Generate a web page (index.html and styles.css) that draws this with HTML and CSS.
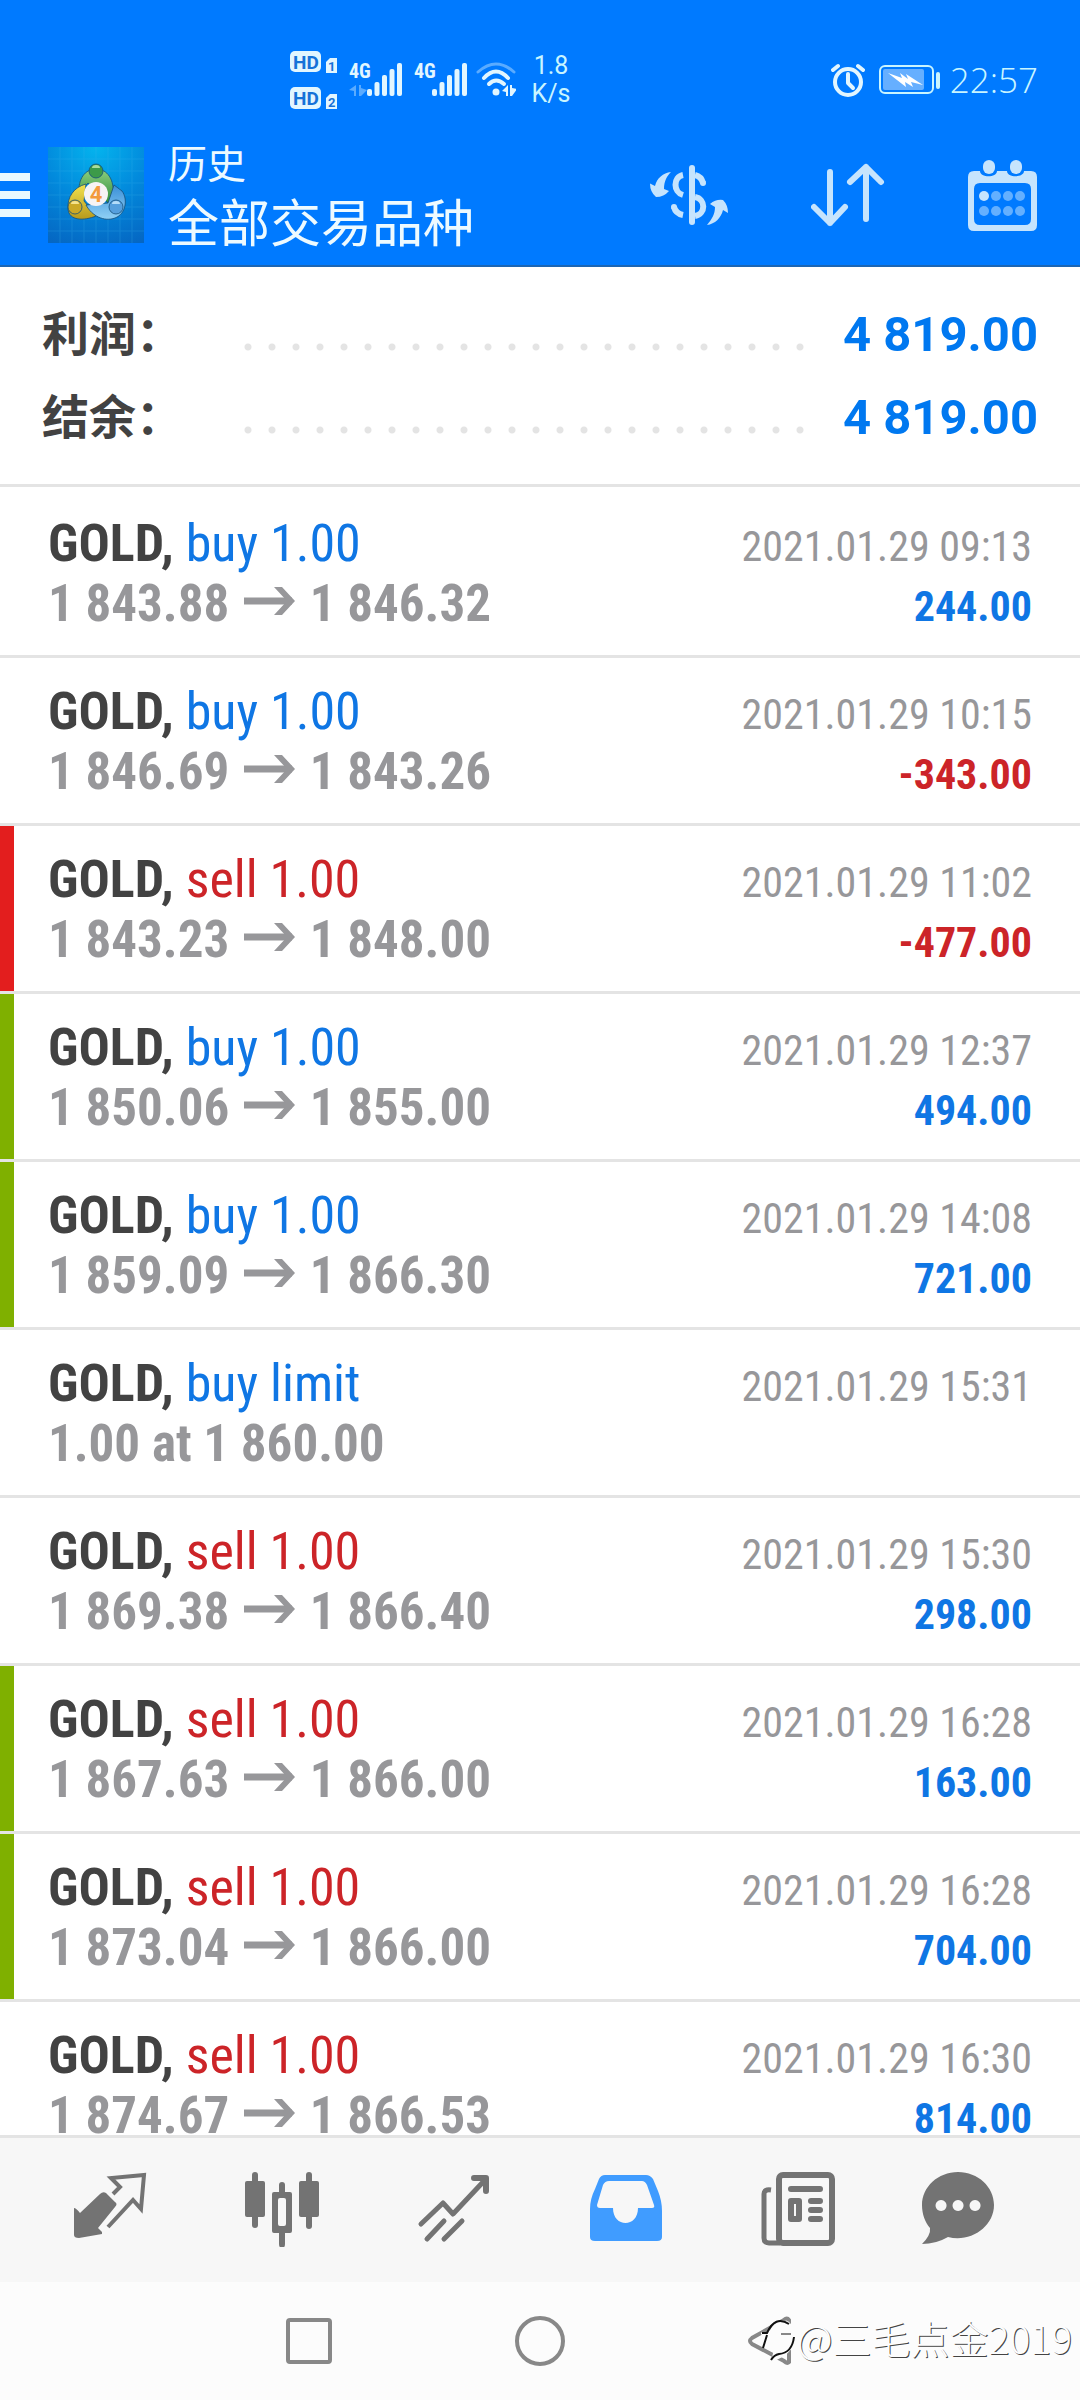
FILE: index.html
```html
<!DOCTYPE html>
<html lang="zh-CN">
<head>
<meta charset="utf-8">
<meta name="viewport" content="width=device-width, initial-scale=1">
<title>历史</title>
<link rel="stylesheet" href="styles.css">
</head>
<body>
<svg class="defs" width="0" height="0" aria-hidden="true">
  <symbol id="arrow" viewBox="0 0 51 28"><path d="M0 14H48" fill="none" stroke="currentColor" stroke-width="7"/><path d="M30 0H38L51 14L38 28H30L43 14Z" fill="currentColor"/></symbol>
</svg>

<header class="top">
  <div class="status">
    <svg class="status-net" viewBox="0 0 226 64" role="img" aria-label="HD 4G">
      <g fill="#e2f6ff">
        <rect y="3" width="31" height="21" rx="5"/>
        <rect y="39" width="31" height="22" rx="5"/>
        <path d="M40 10h7v15h-11v-11z"/>
        <path d="M40 46h7v15h-11v-11z"/>
        <g>
          <rect x="77" y="41" width="5" height="7" rx="2"/><rect x="84.500" y="34" width="5" height="14" rx="2"/><rect x="92" y="27" width="5" height="21" rx="2"/><rect x="99.500" y="21" width="5" height="27" rx="2"/><rect x="107" y="15" width="5" height="33" rx="2"/>
        </g>
        <g transform="translate(65)">
          <rect x="77" y="41" width="5" height="7" rx="2"/><rect x="84.500" y="34" width="5" height="14" rx="2"/><rect x="92" y="27" width="5" height="21" rx="2"/><rect x="99.500" y="21" width="5" height="27" rx="2"/><rect x="107" y="15" width="5" height="33" rx="2"/>
        </g>
        <path d="M59 42l7-5v11h-2v-5zM69 37h2v3l6 2-6 6h-2z" opacity=".4"/>
        <circle cx="206" cy="44" r="3.500"/>
        <path d="M212 43l6-6v11h-2v-4zM220 37h2v3l5 1-5 7h-2z"/>
        <text class="net-label" x="59" y="30">4G</text>
        <text class="net-label" x="124" y="30">4G</text>
      </g>
      <g fill="none" stroke="#e2f6ff" stroke-width="4" stroke-linecap="round">
        <path d="M188 24Q206 8 224 24" opacity=".4" stroke-width="3"/>
        <path d="M194 30Q206 17 218 30"/>
        <path d="M199 36Q206 29 214 36"/>
      </g>
      <g fill="#1672d8">
        <text class="hd-label" x="3" y="21">HD</text>
        <text class="hd-label" x="3" y="57">HD</text>
        <text class="sim-label" x="38" y="23">1</text>
        <text class="sim-label" x="38" y="59">2</text>
      </g>
    </svg>
    <p class="speed">1.8<br>K/s</p>
    <svg class="alarm" viewBox="0 0 34 34" fill="none" stroke="#e2f6ff" aria-hidden="true">
      <circle cx="17" cy="19" r="13" stroke-width="4"/>
      <path d="M17 11V20L22 25" stroke-width="4" stroke-linecap="round" stroke-linejoin="round"/>
      <path d="M2 7L7 3M27 3L32 7" stroke-width="4" stroke-linecap="round"/>
    </svg>
    <svg class="battery" viewBox="0 0 61 30" aria-hidden="true">
      <rect x="1" y="1" width="53" height="27" rx="5" fill="none" stroke="#c9f5ff" stroke-width="2"/>
      <rect x="4" y="4" width="41" height="21" rx="2" fill="#66afff"/>
      <rect x="57" y="7" width="4" height="17" rx="2" fill="#c9f5ff"/>
      <path d="M9 8L23 13 21 8 29 14 27 9 44 20 32 17 34 22 26 17 27 22Z" fill="#fff"/>
    </svg>
    <time class="clock">22:57</time>
  </div>

  <div class="appbar">
    <button class="menu" aria-label="菜单"><span></span><span></span><span></span></button>
    <svg class="logo" viewBox="0 0 96 96" role="img" aria-label="MetaTrader 4">
      <defs>
        <radialGradient id="bg" cx=".5" cy="0" r="1.100"><stop offset="0" stop-color="#04b4ee"/><stop offset=".5" stop-color="#0289dc"/><stop offset="1" stop-color="#0566c2"/></radialGradient>
        <linearGradient id="gr" x2="0" y2="1"><stop offset="0" stop-color="#8ed07e"/><stop offset="1" stop-color="#2f8c3e"/></linearGradient>
        <linearGradient id="ye" x2="0" y2="1"><stop offset="0" stop-color="#f3e14e"/><stop offset="1" stop-color="#b79a1c"/></linearGradient>
        <linearGradient id="bl" x2="0" y2="1"><stop offset="0" stop-color="#3a8fd8"/><stop offset="1" stop-color="#8fd0f5"/></linearGradient>
      </defs>
      <rect width="96" height="96" fill="url(#bg)"/>
      <path d="M12 0V96M24 0V96M36 0V96M48 0V96M60 0V96M72 0V96M84 0V96M0 12H96M0 24H96M0 36H96M0 48H96M0 60H96M0 72H96M0 84H96" stroke="#3db4ec" stroke-width="1" opacity=".25"/>
      <g stroke="#17507a" stroke-opacity=".8" stroke-width="1">
        <path d="M31 46C30 32 37 22 48 22S67 32 65 50L60 56 40 36Z" fill="url(#gr)"/>
        <path d="M38 37C26 40 19 50 20 62S36 74 48 69L36 54Z" fill="url(#ye)"/>
        <path d="M38 58C44 69 56 75 67 71S80 52 74 44L66 38 60 56Z" fill="url(#bl)"/>
        <circle cx="48" cy="24" r="7" fill="#3c9a49"/>
        <circle cx="27" cy="60" r="7" fill="#cba926"/>
        <circle cx="68" cy="60" r="7" fill="#559fdd"/>
      </g>
      <path d="M44 21a4 3 0 0 1 8 0z" fill="#a8dc9c"/><path d="M23 57a4 3 0 0 1 8 0z" fill="#f4e28c"/><path d="M64 57a4 3 0 0 1 8 0z" fill="#b4dcf8"/>
      <circle cx="48" cy="47" r="12" fill="#f6f3f4"/>
      <text class="logo-num" x="48" y="55" text-anchor="middle" fill="#f39a3c">4</text>
    </svg>
    <div class="titles">
      <h1>历史</h1>
      <p>全部交易品种</p>
    </div>
    <div class="actions">
      <button aria-label="品种">
        <svg width="78" height="60" viewBox="0 0 78 60" fill="#c6e4fd">
          <path d="M21 7C13 8 7 13 5 21L0 18.500Q0 27 6 32Q14 32 19 26L14 24C14 16 17 11 21 7Z"/>
          <path d="M57 60C65 59 71 53 73 45L78 48Q78 40 73 35Q66 34 60 39L65 42C65 49 62 54 57 60Z"/>
          <rect x="39" width="6" height="60" rx="3"/>
          <g fill="none" stroke="#c6e4fd" stroke-width="6">
            <path d="M33 10C23 12 23 27 33 30"/>
            <path d="M24 42C25 46 28 49 33 50"/><circle cx="24" cy="42" r="3" fill="#c6e4fd" stroke="none"/>
            <path d="M45 10C49 11 52 14 53 18"/><circle cx="53" cy="18" r="3" fill="#c6e4fd" stroke="none"/>
            <path d="M45 32C56 34 56 49 45 51"/>
          </g>
        </svg>
      </button>
      <button aria-label="排序">
        <svg width="74" height="64" viewBox="0 0 74 64" fill="none" stroke="#c6e4fd" stroke-width="6" stroke-linecap="round" stroke-linejoin="round">
          <path d="M19 9V60M3 44L19 60L34 44M55 56V4M39 19L55 4L70 19"/>
        </svg>
      </button>
      <button aria-label="日期">
        <svg width="70" height="72" viewBox="0 0 70 72">
          <path fill="#c6e4fd" fill-rule="evenodd" d="M6 12H12C12 19 29 19 29 12H39C39 19 56 19 56 12H63Q69 12 69 18V66Q69 72 63 72H6Q0 72 0 66V18Q0 12 6 12ZM12 24Q6 24 6 30V60Q6 66 12 66H57Q63 66 63 60V30Q63 24 57 24Z"/>
          <rect x="15" y="1" width="12" height="14" rx="6" fill="#c6e4fd"/><rect x="42" y="1" width="12" height="14" rx="6" fill="#c6e4fd"/>
          <circle cx="16" cy="37" r="5" fill="#c6e4fd"/>
          <g fill="#64b0ff"><circle cx="28" cy="37" r="5"/><circle cx="40" cy="37" r="5"/><circle cx="52" cy="37" r="5"/><circle cx="16" cy="52" r="5"/><circle cx="28" cy="52" r="5"/><circle cx="40" cy="52" r="5"/><circle cx="52" cy="52" r="5"/></g>
        </svg>
      </button>
    </div>
  </div>
</header>

<main class="history">
  <dl class="summary">
    <div><dt>利润：</dt><dd>4 819.00</dd></div>
    <div><dt>结余：</dt><dd>4 819.00</dd></div>
  </dl>
  <ul class="deals">
    <li><p class="name"><b>GOLD,</b> <span class="buy">buy 1.00</span></p><time>2021.01.29 09:13</time><p class="price">1 843.88 <svg><use href="#arrow"/></svg> 1 846.32</p><p class="profit buy">244.00</p></li>
    <li><p class="name"><b>GOLD,</b> <span class="buy">buy 1.00</span></p><time>2021.01.29 10:15</time><p class="price">1 846.69 <svg><use href="#arrow"/></svg> 1 843.26</p><p class="profit sell">-343.00</p></li>
    <li class="stop"><p class="name"><b>GOLD,</b> <span class="sell">sell 1.00</span></p><time>2021.01.29 11:02</time><p class="price">1 843.23 <svg><use href="#arrow"/></svg> 1 848.00</p><p class="profit sell">-477.00</p></li>
    <li class="take"><p class="name"><b>GOLD,</b> <span class="buy">buy 1.00</span></p><time>2021.01.29 12:37</time><p class="price">1 850.06 <svg><use href="#arrow"/></svg> 1 855.00</p><p class="profit buy">494.00</p></li>
    <li class="take"><p class="name"><b>GOLD,</b> <span class="buy">buy 1.00</span></p><time>2021.01.29 14:08</time><p class="price">1 859.09 <svg><use href="#arrow"/></svg> 1 866.30</p><p class="profit buy">721.00</p></li>
    <li><p class="name"><b>GOLD,</b> <span class="buy">buy limit</span></p><time>2021.01.29 15:31</time><p class="price">1.00 at 1 860.00</p></li>
    <li><p class="name"><b>GOLD,</b> <span class="sell">sell 1.00</span></p><time>2021.01.29 15:30</time><p class="price">1 869.38 <svg><use href="#arrow"/></svg> 1 866.40</p><p class="profit buy">298.00</p></li>
    <li class="take"><p class="name"><b>GOLD,</b> <span class="sell">sell 1.00</span></p><time>2021.01.29 16:28</time><p class="price">1 867.63 <svg><use href="#arrow"/></svg> 1 866.00</p><p class="profit buy">163.00</p></li>
    <li class="take"><p class="name"><b>GOLD,</b> <span class="sell">sell 1.00</span></p><time>2021.01.29 16:28</time><p class="price">1 873.04 <svg><use href="#arrow"/></svg> 1 866.00</p><p class="profit buy">704.00</p></li>
    <li><p class="name"><b>GOLD,</b> <span class="sell">sell 1.00</span></p><time>2021.01.29 16:30</time><p class="price">1 874.67 <svg><use href="#arrow"/></svg> 1 866.53</p><p class="profit buy">814.00</p></li>
  </ul>
</main>

<nav class="tabs">
  <button aria-label="行情">
    <svg viewBox="0 0 76 76"><path d="M2 37Q4 37 8 42L28 23Q31 20 34 22L43 31Q46 33 43 36L26 57 30 61V63L7 67Q2 67 2 64Z" fill="currentColor"/><path d="M41 23L48 16 39 7 72 4 69 38 61 29 36 56" fill="none" stroke="currentColor" stroke-width="4"/></svg>
  </button>
  <button aria-label="图表">
    <svg viewBox="0 0 76 76"><g fill="currentColor"><rect x="1" y="10" width="20" height="36" rx="2"/><rect x="8" y="1" width="6" height="56" rx="3"/><rect x="55" y="10" width="20" height="36" rx="2"/><rect x="62" y="1" width="6" height="57" rx="3"/><path fill-rule="evenodd" d="M30 21H46Q48 21 48 23V60Q48 62 46 62H41V73Q41 77 38 77T35 73V62H30Q28 62 28 60V23Q28 21 30 21ZM36 27Q34 27 34 29V53Q34 55 36 55H40Q42 55 42 53V29Q42 27 40 27Z"/><rect x="35" y="11" width="6" height="14" rx="3"/></g></svg>
  </button>
  <button aria-label="交易">
    <svg viewBox="0 0 76 76" fill="none" stroke="currentColor" stroke-width="5" stroke-linecap="round" stroke-linejoin="round"><path d="M5 53L27 32 37 43 68 10M11 68L28 50M28 68L46 50"/><path d="M58 7H70V20" stroke-width="6"/></svg>
  </button>
  <button class="current" aria-label="历史" aria-current="page">
    <svg viewBox="0 0 76 76"><path fill="currentColor" fill-rule="evenodd" d="M17 4H58Q62 4 65 8L70 20Q74 30 74 40V66Q74 70 69 70H7Q2 70 2 66V38Q2 28 7 18L11 8Q13 4 17 4ZM21 10Q17 10 15 14L9 34Q9 37 12 37H25C25 57 50 57 50 37H64Q67 37 66 34L59 14Q57 10 54 10Z"/></svg>
  </button>
  <button aria-label="新闻">
    <svg viewBox="0 0 76 76" fill="none" stroke="currentColor"><rect x="19" y="4" width="53" height="68" rx="4" stroke-width="6"/><path d="M11 19Q4 18 4 23V67Q4 72 9 72H20" stroke-width="5"/><path d="M31 18H60M51 30H60M51 39H60M51 48H60" stroke-width="6" stroke-linecap="round"/><rect x="31" y="30" width="8" height="18" stroke-width="6" stroke-linejoin="round"/></svg>
  </button>
  <button aria-label="消息">
    <svg viewBox="0 0 76 76"><path fill="currentColor" fill-rule="evenodd" d="M38 1C58 1 74 16 74 34C74 56 50 72 28 66Q16 73 2 73Q11 64 10 57C5 51 2 43 2 34C2 16 18 1 38 1ZM21 29a5.500 5.500 0 1 0 .1 0ZM38 29a5.500 5.500 0 1 0 .1 0ZM55 29a5.500 5.500 0 1 0 .1 0Z"/></svg>
  </button>
</nav>

<footer class="system">
  <button aria-label="最近任务"><svg viewBox="0 0 52 52"><rect x="5" y="5" width="42" height="42" rx="2"/></svg></button>
  <button aria-label="主页"><svg viewBox="0 0 52 52"><circle cx="26" cy="26" r="23"/></svg></button>
  <button aria-label="返回"><svg viewBox="0 0 52 52"><path d="M44 5V47Q42 49 39 46L7 29Q3 26 7 23L39 5Q42 2 44 5Z"/></svg></button>
  <p class="watermark">
    <svg viewBox="0 0 36 48" aria-hidden="true"><path d="M2 21H9Q15 6 27 10Q36 18 33 29Q28 41 12 47L14 38Q3 36 4 24Z" fill="#fcfcfc" stroke="#fcfcfc" stroke-width="3"/><path d="M1 20H6Q14 2 28 11M33 24Q31 40 18 41Q13 42 10 47M6 22L2 35" fill="none" stroke="#111" stroke-width="2"/><path d="M20 21H30" stroke="#888" stroke-width="2"/></svg>@三毛点金2019</p>
</footer>
</body>
</html>
```
FILE: styles.css
```css
* { box-sizing: border-box; margin: 0; padding: 0; }

body {
  display: flex;
  flex-direction: column;
  height: 100vh;
  background: #fff;
  color: #424242;
  font-family: Roboto, "Noto Sans CJK SC", sans-serif;
}

ul { list-style: none; }
svg { display: block; }
.defs { position: absolute; }

button {
  display: flex;
  align-items: center;
  justify-content: center;
  border: 0;
  background: none;
  color: inherit;
}

/* status bar and title bar */
.top {
  flex: none;
  background: #007aff;
  border-bottom: 2px solid #1c66b4;
  color: #edfaff;
}
.status {
  display: flex;
  align-items: center;
  height: 127px;
  padding: 32px 42px 0 290px;
}
.status-net { width: 226px; height: 64px; }
.net-label { font: bold 20px "Roboto Condensed", sans-serif; }
.hd-label { font: bold 19px Roboto, sans-serif; }
.sim-label { font: bold 13px Roboto, sans-serif; }
.speed {
  width: 70px;
  font-size: 25px;
  line-height: 28px;
  text-align: center;
  color: #c9f5ff;
}
.alarm { width: 34px; height: 34px; margin-left: auto; }
.battery { width: 61px; height: 30px; margin: 0 10px 0 14px; }
.clock { font: 300 35px/40px "Open Sans", sans-serif; color: #c9f5ff; }

.appbar {
  display: flex;
  align-items: center;
  height: 138px;
  padding: 0 42px 3px 0;
}
.menu {
  flex-direction: column;
  gap: 10px;
  width: 30px;
  margin-right: 18px;
}
.menu span { width: 30px; height: 8px; background: #e8f8ff; }
.logo { width: 96px; height: 96px; }
.logo-num { font: bold 22px Roboto, sans-serif; }
.titles { flex: 1; margin-left: 24px; padding-top: 4px; }
.titles h1 { font-size: 39px; line-height: 56px; font-weight: 400; }
.titles p { font-size: 51px; line-height: 64px; }
.actions { display: flex; align-items: center; gap: 83px; }

/* totals */
.history { flex: 1; min-height: 0; overflow: hidden; }
.summary { padding: 26px 42px 25px; }
.summary div {
  display: flex;
  align-items: baseline;
  height: 83px;
  line-height: 83px;
  font-weight: 700;
}
.summary dt {
  flex: 1;
  display: grid;
  grid-template-columns: 194px 1fr;
  font-size: 47px;
}
/* dotted leader between the label and its sum */
.summary dt::after {
  content: "";
  background: radial-gradient(circle at 12px 54px, #e4e4e4 3px, transparent 4px) 0 0 / 24px 83px repeat-x;
}
.summary dd {
  width: 226px;
  font-size: 49px;
  color: #0078f0;
  text-align: right;
}

/* deals */
.deals {
  border-top: 3px solid #e4e4e4;
  padding-top: 3px;
  font-family: "Roboto Condensed", Roboto, sans-serif;
}
.deals li {
  display: grid;
  grid-template-columns: 1fr auto;
  align-items: baseline;
  align-content: start;
  height: 168px;
  padding: 25px 48px 0;
  border-bottom: 3px solid #e4e4e4;
  line-height: 57px;
  font-size: 42px;
}
.deals .stop { box-shadow: inset 14px 0 #e31e1e; }
.deals .take { box-shadow: inset 14px 0 #7fb000; }
.deals .name { font-size: 52px; }
.deals .price { font-size: 51px; }
.price, time { color: #97979a; }
.price, .profit { font-weight: 700; }
.price svg { display: inline-block; width: 51px; height: 28px; margin: 0 3px; vertical-align: 6px; }
.profit { text-align: right; }
.buy { color: #0f76e4; }
.sell { color: #cc2428; }

/* bottom tabs */
.tabs {
  flex: none;
  display: grid;
  grid-template-columns: repeat(5, 172fr) 147fr;
  height: 147px;
  padding: 0 49px 3px 24px;
  border-top: 3px solid #e4e4e4;
  background: #f7f7f7;
  color: #737373;
}
.tabs svg { width: 76px; height: 76px; }
.tabs .current { color: #409cff; }

/* system navigation */
.system {
  flex: none;
  position: relative;
  display: grid;
  grid-template-columns: repeat(3, 231px);
  justify-content: center;
  height: 118px;
  background: #fcfcfc;
}
.system button svg { width: 52px; height: 52px; fill: none; stroke: #888; stroke-width: 4; }
.watermark {
  position: absolute;
  right: 8px;
  bottom: 38px;
  display: flex;
  align-items: center;
  color: #fdfdfd;
  font: 300 39px/50px "Noto Sans CJK SC", sans-serif;
  text-shadow: 1px 1px 0 #444;
}
.watermark svg { width: 36px; height: 48px; }
```
